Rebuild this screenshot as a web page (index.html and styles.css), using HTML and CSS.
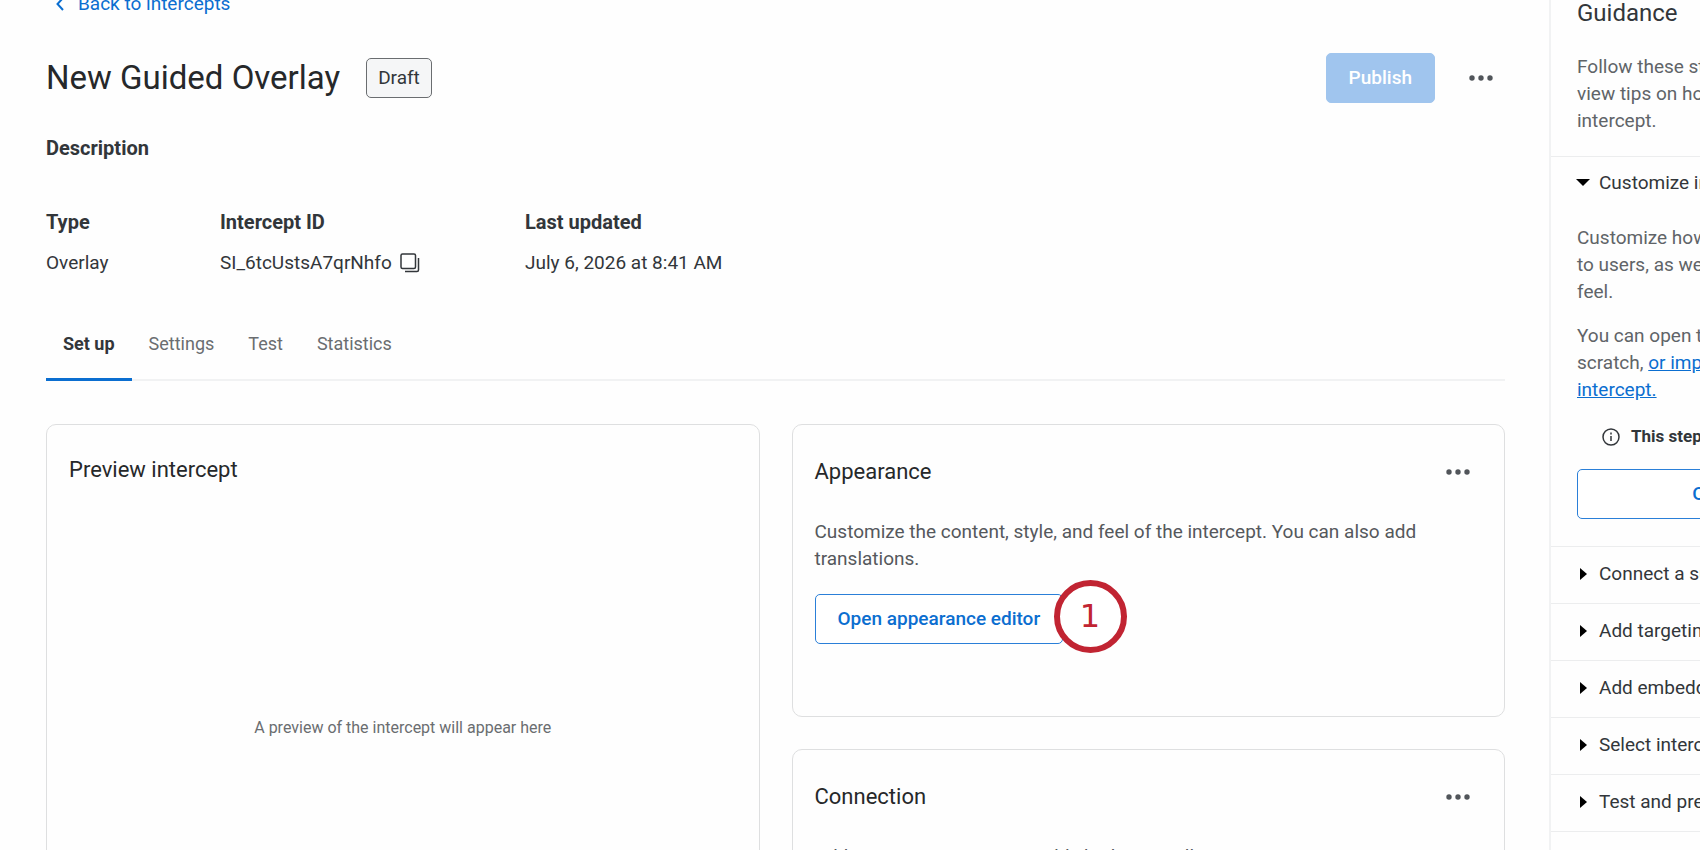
FILE: index.html
```html
<!DOCTYPE html>
<html lang="en">
<head>
    <meta charset="UTF-8">
    <meta name="viewport" content="width=device-width, initial-scale=1.0">
    <title>New Guided Overlay</title>
    <link rel="stylesheet" href="styles.css">
</head>
<body>
    <div class="page">
        <main class="main">
            <a class="back" href="#">
                <svg width="8" height="14" viewBox="0 0 8 14" aria-hidden="true"><path d="M7 1 1.500 7 7 13" fill="none" stroke="currentColor" stroke-width="2"/></svg>
                Back to intercepts
            </a>

            <header class="title-row">
                <h1>New Guided Overlay</h1>
                <span class="badge">Draft</span>
                <button class="btn publish" type="button" disabled>Publish</button>
                <button class="more" type="button" aria-label="More options">
                    <svg width="24" height="6" viewBox="0 0 24 6"><circle cx="3" cy="3" r="2.700"/><circle cx="12" cy="3" r="2.700"/><circle cx="21" cy="3" r="2.700"/></svg>
                </button>
            </header>

            <h2 class="description">Description</h2>

            <dl class="details">
                <div class="detail">
                    <dt>Type</dt>
                    <dd>Overlay</dd>
                </div>
                <div class="detail">
                    <dt>Intercept ID</dt>
                    <dd>SI_6tcUstsA7qrNhfo
                        <button class="copy" type="button" aria-label="Copy intercept ID">
                            <svg width="20" height="20" viewBox="0 0 20 20" fill="none" stroke="currentColor" stroke-width="1.500"><rect x="1" y="1" width="14.500" height="14.500" rx="1.500"/><path d="M5 18.500h12a1.500 1.500 0 0 0 1.500-1.500V5"/></svg>
                        </button>
                    </dd>
                </div>
                <div class="detail">
                    <dt>Last updated</dt>
                    <dd>July 6, 2026 at 8:41 AM</dd>
                </div>
            </dl>

            <nav class="tabs">
                <a class="tab active" href="#">Set up</a>
                <a class="tab" href="#">Settings</a>
                <a class="tab" href="#">Test</a>
                <a class="tab" href="#">Statistics</a>
            </nav>

            <div class="cards">
                <section class="card preview">
                    <h2>Preview intercept</h2>
                    <p>A preview of the intercept will appear here</p>
                </section>
                <div class="column">
                    <section class="card">
                        <div class="card-head">
                            <h2>Appearance</h2>
                            <button class="more" type="button" aria-label="Appearance options">
                                <svg width="24" height="6" viewBox="0 0 24 6"><circle cx="3" cy="3" r="2.700"/><circle cx="12" cy="3" r="2.700"/><circle cx="21" cy="3" r="2.700"/></svg>
                            </button>
                        </div>
                        <p>Customize the content, style, and feel of the intercept. You can also add translations.</p>
                        <div class="action">
                            <button class="btn outline" type="button">Open appearance editor</button>
                            <span class="marker">1</span>
                        </div>
                    </section>
                    <section class="card">
                        <div class="card-head">
                            <h2>Connection</h2>
                            <button class="more" type="button" aria-label="Connection options">
                                <svg width="24" height="6" viewBox="0 0 24 6"><circle cx="3" cy="3" r="2.700"/><circle cx="12" cy="3" r="2.700"/><circle cx="21" cy="3" r="2.700"/></svg>
                            </button>
                        </div>
                        <p>Add one or more surveys; published ones will appear on your intercept. This can be changed later.</p>
                    </section>
                </div>
            </div>
        </main>

        <aside class="guidance">
            <div class="intro">
                <h2>Guidance</h2>
                <p>Follow these steps to set up your intercept, or<br>view tips on how to get the most out of your<br>intercept.</p>
            </div>
            <details open>
                <summary>Customize intercept</summary>
                <div class="step">
                    <p>Customize how your intercept will appear<br>to users, as well as its overall look and<br>feel.</p>
                    <p>You can open the editor to start from<br>scratch, <a href="#">or import an existing<br>intercept.</a></p>
                    <div class="note">
                        <svg width="18" height="18" viewBox="0 0 18 18" fill="none" stroke="currentColor" stroke-width="1.500"><circle cx="9" cy="9" r="8"/><path d="M9 8v5M9 4.500v2"/></svg>
                        This step is required
                    </div>
                    <button class="btn outline" type="button">Open appearance editor</button>
                </div>
            </details>
            <details><summary>Connect a survey</summary></details>
            <details><summary>Add targeting</summary></details>
            <details><summary>Add embedded data</summary></details>
            <details><summary>Select intercept options</summary></details>
            <details><summary>Test and preview</summary></details>
        </aside>
    </div>
</body>
</html>
```
FILE: styles.css
```css
* { box-sizing: border-box; }
body { margin: 0; font-family: Roboto, "Liberation Sans", sans-serif; font-size: 19px; line-height: 27px; color: #32363a; background: #fefefe; }
h1, h2, p, dl, dd { margin: 0; }
a { color: #0b6ed0; }
button { font: inherit; cursor: pointer; }

.page { display: flex; height: 100vh; overflow: hidden; }
.main { flex: 1; padding: 0 44px 0 46px; }

/* header */
.back { display: flex; align-items: center; gap: 14px; margin-top: -10px; padding-left: 10px; text-decoration: none; }
.title-row { display: flex; align-items: center; margin-top: 36px; }
h1 { font-size: 33px; line-height: 40px; font-weight: 400; color: #26282a; }
.badge { margin-left: 26px; padding: 5px 11px 6px; border: 1px solid #6a6d70; border-radius: 5px; background: #f5f6f7; }
.btn { height: 50px; padding: 0 22px 2px; border-radius: 5px; font-weight: 500; }
.publish { margin-left: auto; border: 1px solid #a0c5ee; background: #a0c5ee; color: #fff; }
.more { display: flex; padding: 12px; border: 0; background: none; fill: #51555a; }
.title-row .more { margin-left: 22px; }
.description { margin-top: 32px; font-size: 20px; line-height: 27px; font-weight: 700; }

.details { display: flex; margin-top: 47px; }
.detail { width: 174px; }
.detail:nth-child(2) { width: 305px; }
.detail:nth-child(3) { width: auto; }
dt { font-size: 20px; font-weight: 700; }
dd { display: flex; align-items: center; gap: 8px; margin-top: 13px; }
.copy { display: flex; padding: 0; border: 0; background: none; color: #32363a; }

.tabs { display: flex; margin-top: 41px; border-bottom: 2px solid #f1f2f3; }
.tab { margin-bottom: -2px; padding: 13px 17px 21px; border-bottom: 3px solid transparent; font-size: 18px; color: #6a6d70; text-decoration: none; }
.tab.active { border-color: #0b6ed0; color: #32363a; font-weight: 700; }

/* cards */
.cards { display: grid; grid-template-columns: 1fr 1fr; gap: 32px; margin-top: 43px; }
.column { display: flex; flex-direction: column; gap: 32px; }
.card { min-height: 293px; padding: 24px 22px; border: 1px solid #dedfe0; border-radius: 10px; }
.card h2 { font-size: 22px; line-height: 30px; font-weight: 400; color: #26282a; }
.card p { margin-top: 23px; padding-right: 40px; color: #55585c; }
.card-head { display: flex; align-items: center; justify-content: space-between; height: 46px; }
.preview { display: flex; flex-direction: column; padding-top: 30px; }
.preview p { margin-top: 229px; padding: 0; text-align: center; font-size: 16px; color: #6a6d70; }
.outline { border: 1px solid #2a7fd8; background: #fff; color: #0b6ed0; }
.action { position: relative; display: inline-block; margin-top: 22px; }
.marker { position: absolute; top: -14px; left: 239px; width: 73px; height: 73px; border: 6px solid #c12432; border-radius: 50%; background: #fff; color: #c12432; font: 32px/60px "DejaVu Sans", sans-serif; text-align: center; }

/* the panel runs past the right edge of the window */
.guidance { flex: 0 0 487px; margin-right: -336px; border-left: 2px solid #f1f2f3; }
.intro { padding: 0 26px 22px; }
.intro h2 { font-size: 24px; line-height: 27px; font-weight: 400; }
.intro p { margin-top: 26px; color: #606468; }
details { border-top: 1px solid #ecedee; }
details:last-child { border-bottom: 1px solid #ecedee; }
summary { display: flex; align-items: center; gap: 12px; height: 56px; padding: 0 26px 3px 29px; list-style: none; cursor: pointer; }
summary::before { content: ""; border-left: 7px solid #000; border-top: 6px solid transparent; border-bottom: 6px solid transparent; }
details[open] summary { height: 50px; gap: 9px; padding: 0 25px; }
details[open] summary::before { border-top: 7px solid #000; border-left: 7px solid transparent; border-right: 7px solid transparent; border-bottom: 0; }
.step { padding: 17px 26px 27px; }
.step p { margin-bottom: 17px; color: #606468; }
.note { display: flex; align-items: center; gap: 11px; padding: 3px 25px 19px; font-size: 17px; font-weight: 700; }
.step .btn { width: 100%; }
```
